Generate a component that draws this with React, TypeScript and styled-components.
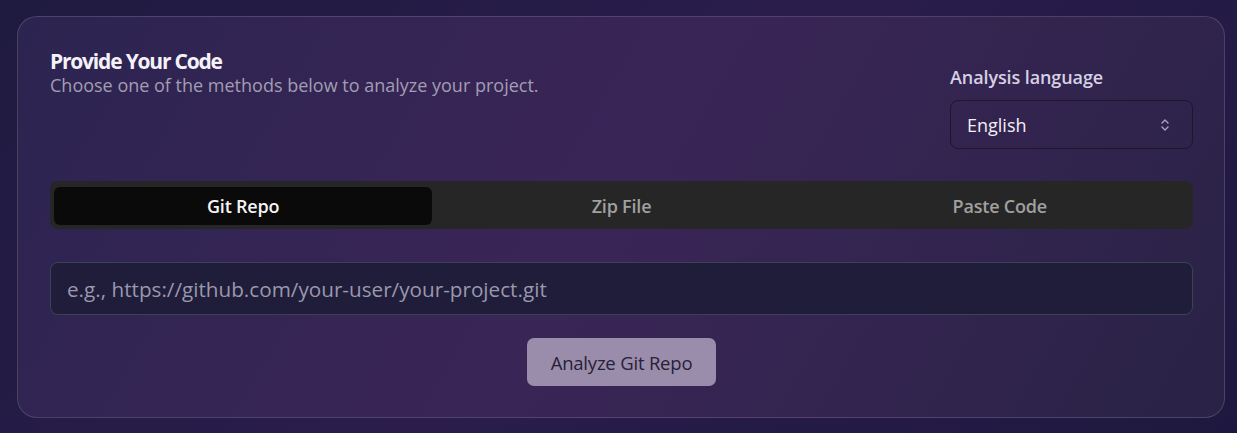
import React, { useState } from "react";
import styled, { createGlobalStyle } from "styled-components";

const Global = createGlobalStyle`
  html, body { margin: 0; padding: 0; background: #221a42; }
  body { font-family: "Open Sans", "Noto Sans", sans-serif; }
  * { box-sizing: border-box; }
`;

const Page = styled.div`
  min-height: 433px;
  padding: 16px 12px 15px 17px;
  background: linear-gradient(135deg, #1f1a40 0%, #2a1d4c 50%, #1e1840 100%);
`;

const Card = styled.section`
  border: 1px solid rgba(255, 255, 255, 0.14);
  border-radius: 20px;
  padding: 30px 31px 31px 32px;
  background: linear-gradient(120deg, #2c2450 0%, #3a2557 48%, #2a2346 100%);
  display: flex;
  flex-direction: column;
`;

const Header = styled.div`
  display: flex;
  justify-content: space-between;
  align-items: flex-start;
`;

const TitleBlock = styled.div`
  display: flex;
  flex-direction: column;
`;

const Title = styled.h2`
  margin: 0;
  font-size: 21px;
  font-weight: 700;
  letter-spacing: -1.2px;
  color: #f4f2f8;
  line-height: 28px;
`;

const Subtitle = styled.p`
  margin: 0;
  font-size: 18px;
  color: #a39db2;
  line-height: 21px;
`;

const LangBlock = styled.div`
  display: flex;
  flex-direction: column;
  gap: 11px;
  padding-top: 18px;
  width: 243px;
`;

const Label = styled.label`
  font-size: 18px;
  font-weight: 600;
  color: #d6d1e4;
  line-height: 24px;
  letter-spacing: -0.1px;
`;

const Select = styled.div`
  height: 49px;
  border: 1px solid #1c1828;
  border-radius: 8px;
  display: flex;
  align-items: center;
  justify-content: space-between;
  padding: 0 22px 0 16px;
  color: #f2f0f6;
  font-size: 18px;
`;

const Tabs = styled.div`
  margin-top: 32px;
  height: 48px;
  background: #262626;
  border-radius: 8px;
  padding: 6px 4px 4px;
  display: grid;
  grid-template-columns: repeat(3, 1fr);
`;

const Tab = styled.button<{ $active?: boolean }>`
  border: none;
  border-radius: 6px;
  background: ${(p) => (p.$active ? "#0a0a0a" : "transparent")};
  color: ${(p) => (p.$active ? "#f5f5f5" : "#a0a0a0")};
  font-family: inherit;
  font-size: 18px;
  font-weight: 600;
  letter-spacing: -0.2px;
  cursor: pointer;
`;

const Input = styled.input`
  margin-top: 33px;
  height: 53px;
  width: 100%;
  background: #1f1d3a;
  border: 1px solid #3a4254;
  border-radius: 8px;
  padding: 0 16px;
  font-family: inherit;
  font-size: 20.7px;
  color: #eee;
  &::placeholder { color: #9a98ac; }
  outline: none;
`;

const Actions = styled.div`
  margin-top: 23px;
  display: flex;
  justify-content: center;
`;

const Button = styled.button`
  height: 48px;
  width: 189px;
  border: none;
  border-radius: 7px;
  background: #9a8dab;
  color: #272038;
  font-family: inherit;
  font-size: 18.5px;
  font-weight: 500;
  letter-spacing: -0.2px;
`;

const Chevrons = () => (
  <svg width="10" height="16" viewBox="0 0 10 16" fill="none" stroke="#a8a3bb" strokeWidth="1.4" strokeLinecap="round" strokeLinejoin="round">
    <path d="M2 6 L5 3 L8 6" />
    <path d="M2 10 L5 13 L8 10" />
  </svg>
);

export default function App() {
  const [tab, setTab] = useState(0);
  const tabs = ["Git Repo", "Zip File", "Paste Code"];
  return (
    <>
      <Global />
      <Page>
        <Card>
          <Header>
            <TitleBlock>
              <Title>Provide Your Code</Title>
              <Subtitle>Choose one of the methods below to analyze your project.</Subtitle>
            </TitleBlock>
            <LangBlock>
              <Label>Analysis language</Label>
              <Select>
                <span>English</span>
                <Chevrons />
              </Select>
            </LangBlock>
          </Header>
          <Tabs>
            {tabs.map((t, i) => (
              <Tab key={t} $active={i === tab} onClick={() => setTab(i)}>
                {t}
              </Tab>
            ))}
          </Tabs>
          <Input placeholder="e.g., https://github.com/your-user/your-project.git" />
          <Actions>
            <Button>Analyze Git Repo</Button>
          </Actions>
        </Card>
      </Page>
    </>
  );
}
